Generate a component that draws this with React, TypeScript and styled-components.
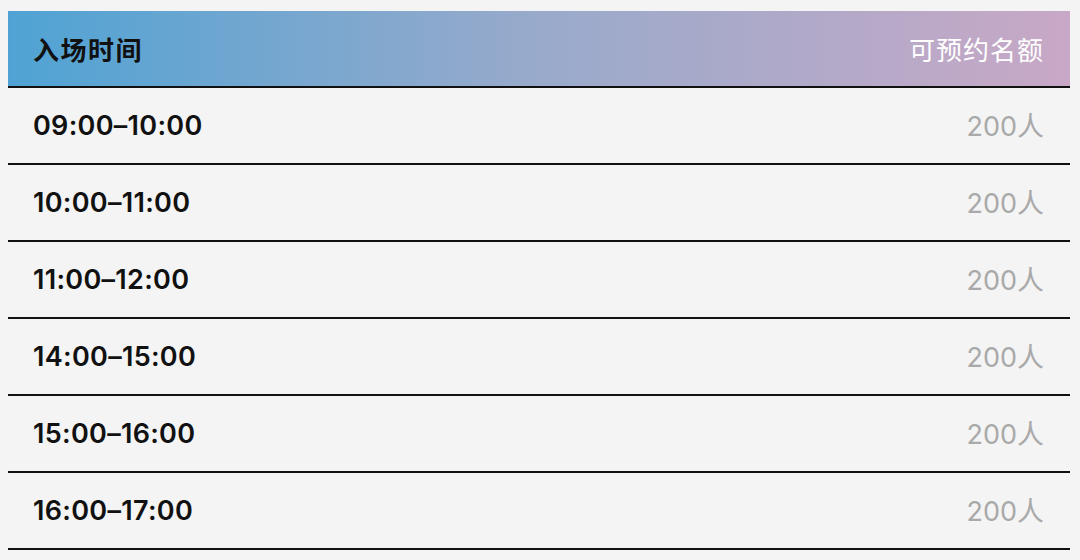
import React from "react";
import styled, { createGlobalStyle } from "styled-components";

const Global = createGlobalStyle`
  html, body { margin: 0; padding: 0; background: #f4f4f4; }
  body { font-family: "Inter", "Noto Sans CJK SC", sans-serif; }
`;

const Page = styled.div`
  padding: 11px 10px 0 8px;
`;

const Table = styled.div`
  display: flex;
  flex-direction: column;
`;

const Row = styled.div<{ $header?: boolean }>`
  display: flex;
  align-items: center;
  justify-content: space-between;
  height: 75px;
  padding: 0 26px 0 25px;
  border-bottom: 2px solid #111;
  background: ${(p) =>
    p.$header ? "linear-gradient(90deg, #4fa3d4 0%, #99aacb 50%, #c8a8c6 100%)" : "transparent"};
`;

const HeadLeft = styled.span`
  font-family: "Noto Sans CJK SC", sans-serif;
  font-size: 26px;
  font-weight: 700;
  color: #111;
  letter-spacing: 1.5px;
`;

const HeadRight = styled.span`
  font-family: "Noto Sans CJK SC", sans-serif;
  font-size: 26px;
  font-weight: 400;
  color: #fff;
  letter-spacing: 1px;
`;

const Time = styled.span`
  font-family: "Inter", "Noto Sans CJK SC", sans-serif;
  font-size: 27px;
  font-weight: 600;
  color: #111;
  letter-spacing: 0.3px;
`;

const Quota = styled.span`
  font-family: "Inter", "Noto Sans CJK SC", sans-serif;
  font-size: 27px;
  font-weight: 400;
  color: #a9a9a9;
  margin-top: -2px;
`;

const slots = [
  "09:00–10:00",
  "10:00–11:00",
  "11:00–12:00",
  "14:00–15:00",
  "15:00–16:00",
  "16:00–17:00",
];

export default function App() {
  return (
    <>
      <Global />
      <Page>
        <Table>
          <Row $header>
            <HeadLeft>入场时间</HeadLeft>
            <HeadRight>可预约名额</HeadRight>
          </Row>
          {slots.map((s) => (
            <Row key={s}>
              <Time>{s}</Time>
              <Quota>200人</Quota>
            </Row>
          ))}
        </Table>
      </Page>
    </>
  );
}
